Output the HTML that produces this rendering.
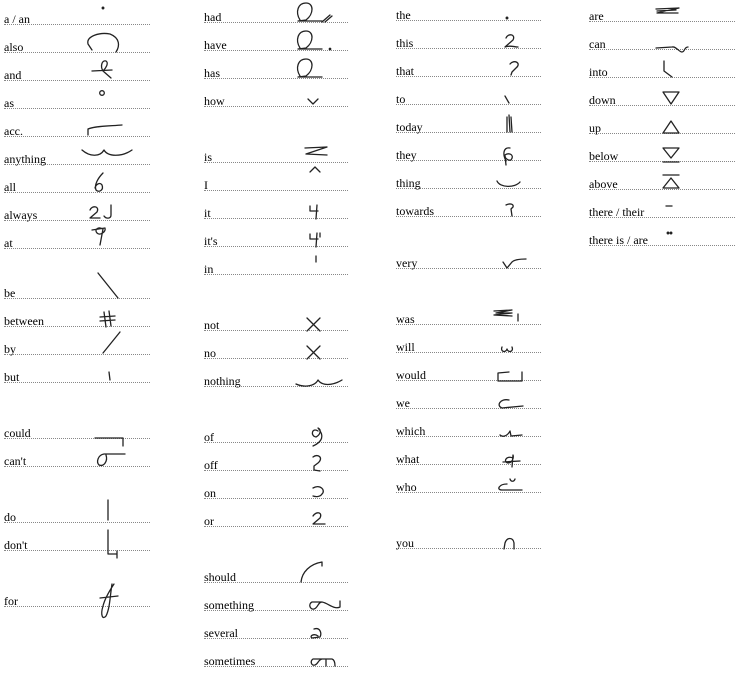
<!DOCTYPE html>
<html><head><meta charset="utf-8"><style>
body{margin:0;width:741px;height:674px;background:#fff;position:relative;overflow:hidden;font-family:"Liberation Serif",serif;font-size:12px;color:#000}
.l{position:absolute;height:14px;line-height:18px;border-bottom:1px dotted #888;white-space:nowrap;overflow:visible}
.c1{left:4px;width:146px}.c2{left:204px;width:144px}.c3{left:396px;width:145px}.c4{left:589px;width:146px}
svg{position:absolute;left:0;top:0}
</style></head><body>
<div class="l c1" style="top:10px">a / an</div>
<div class="l c1" style="top:38px">also</div>
<div class="l c1" style="top:66px">and</div>
<div class="l c1" style="top:94px">as</div>
<div class="l c1" style="top:122px">acc.</div>
<div class="l c1" style="top:150px">anything</div>
<div class="l c1" style="top:178px">all</div>
<div class="l c1" style="top:206px">always</div>
<div class="l c1" style="top:234px">at</div>
<div class="l c1" style="top:284px">be</div>
<div class="l c1" style="top:312px">between</div>
<div class="l c1" style="top:340px">by</div>
<div class="l c1" style="top:368px">but</div>
<div class="l c1" style="top:424px">could</div>
<div class="l c1" style="top:452px">can't</div>
<div class="l c1" style="top:508px">do</div>
<div class="l c1" style="top:536px">don't</div>
<div class="l c1" style="top:592px">for</div>

<div class="l c2" style="top:8px">had</div>
<div class="l c2" style="top:36px">have</div>
<div class="l c2" style="top:64px">has</div>
<div class="l c2" style="top:92px">how</div>
<div class="l c2" style="top:148px">is</div>
<div class="l c2" style="top:176px">I</div>
<div class="l c2" style="top:204px">it</div>
<div class="l c2" style="top:232px">it's</div>
<div class="l c2" style="top:260px">in</div>
<div class="l c2" style="top:316px">not</div>
<div class="l c2" style="top:344px">no</div>
<div class="l c2" style="top:372px">nothing</div>
<div class="l c2" style="top:428px">of</div>
<div class="l c2" style="top:456px">off</div>
<div class="l c2" style="top:484px">on</div>
<div class="l c2" style="top:512px">or</div>
<div class="l c2" style="top:568px">should</div>
<div class="l c2" style="top:596px">something</div>
<div class="l c2" style="top:624px">several</div>
<div class="l c2" style="top:652px">sometimes</div>

<div class="l c3" style="top:6px">the</div>
<div class="l c3" style="top:34px">this</div>
<div class="l c3" style="top:62px">that</div>
<div class="l c3" style="top:90px">to</div>
<div class="l c3" style="top:118px">today</div>
<div class="l c3" style="top:146px">they</div>
<div class="l c3" style="top:174px">thing</div>
<div class="l c3" style="top:202px">towards</div>
<div class="l c3" style="top:254px">very</div>
<div class="l c3" style="top:310px">was</div>
<div class="l c3" style="top:338px">will</div>
<div class="l c3" style="top:366px">would</div>
<div class="l c3" style="top:394px">we</div>
<div class="l c3" style="top:422px">which</div>
<div class="l c3" style="top:450px">what</div>
<div class="l c3" style="top:478px">who</div>
<div class="l c3" style="top:534px">you</div>

<div class="l c4" style="top:7px">are</div>
<div class="l c4" style="top:35px">can</div>
<div class="l c4" style="top:63px">into</div>
<div class="l c4" style="top:91px">down</div>
<div class="l c4" style="top:119px">up</div>
<div class="l c4" style="top:147px">below</div>
<div class="l c4" style="top:175px">above</div>
<div class="l c4" style="top:203px">there / their</div>
<div class="l c4" style="top:231px">there is / are</div>

<svg width="741" height="674" fill="none" stroke="#222" stroke-width="1.3" stroke-linecap="round" stroke-linejoin="round">
<circle cx="103" cy="8" r="0.8" fill="#222"/>
<path d="M92 50 L88 44 C86 36 100 32 110 34 C120 38 120 46 116 52"/>
<path d="M92 71 L112 70 M103 71 C100 66 102 60 106 61 C109 63 106 68 103 71 L111 78"/>
<circle cx="102" cy="93" r="2.3"/>
<path d="M88 135 L88 129 C95 126 110 126 122 125"/>
<path d="M82 150 C90 157 100 157 104 150 C108 157 122 157 132 150"/>
<path d="M103 173 C98 178 94 185 96 190 C99 193 104 190 102 185 C100 182 96 184 95 188"/>
<path d="M90 210 C92 205 100 206 97 212 L90 218 L100 218 M111 205 L111 215 C111 219 106 219 104 216"/>
<path d="M92 230 L105 228 C106 232 100 236 97 233 C94 230 98 226 103 229 L100 245"/>
<path d="M98 273 L118 298"/>
<path d="M104 312 L106 327 M109 311 L111 326 M100 317 L115 316 M100 321 L115 320"/>
<path d="M120 332 L103 353"/>
<path d="M109 372 L110 380"/>
<path d="M95 438 L123 438 L123 446"/>
<path d="M125 454 L104 454 C98 455 96 462 99 465 C104 467 108 461 106 455"/>
<path d="M108 500 L108 520"/>
<path d="M108 530 L108 554 L117 554 M117 551 L117 558"/>
<path d="M114 584 C110 590 105 598 103 606 C100 616 103 620 106 616 C110 608 110 596 112 584 M100 598 L118 596"/>

<path d="M300 20 C295 12 298 3 306 3 C314 3 314 14 306 20 L298 21 L322 21 M322 22 L330 15 M325 22 L332 16"/>
<path d="M300 48 C295 40 298 31 306 31 C314 31 314 42 306 48 L298 49 L322 49"/><circle cx="330" cy="49" r="0.7" fill="#222"/>
<path d="M300 76 C295 68 298 59 306 59 C314 59 314 70 306 76 L298 77 L322 77"/>
<path d="M308 99 L313 104 L318 99"/>
<path d="M305 148 L327 147 L306 154 L327 155"/>
<path d="M310 172 L315 167 L320 172"/>
<path d="M310 206 L310 211 L318 211 M317 205 L316 219"/>
<path d="M310 234 L310 239 L318 239 M317 233 L316 247 M320 233 L320 237"/>
<path d="M316 256 L316 262"/>
<path d="M307 318 L320 331 M320 318 L307 331"/>
<path d="M307 346 L320 359 M320 346 L307 359"/>
<path d="M296 384 C305 388 315 386 318 380 C322 386 332 386 342 380"/>
<path d="M318 431 C312 427 310 436 316 437 C320 435 322 430 318 428 C325 436 322 442 313 446"/>
<path d="M313 457 C318 453 324 458 318 463 L314 466 L314 470 L320 471"/>
<path d="M313 488 C320 484 326 490 322 494 C320 497 316 497 313 496"/>
<path d="M313 516 C316 511 323 512 320 518 L313 524 L325 524"/>
<path d="M301 582 C302 572 310 564 322 562 L322 566"/>
<path d="M322 602 L312 602 C308 604 310 610 314 609 C318 608 318 602 322 602 C328 603 334 610 340 607 L340 601"/>
<path d="M314 629 C320 627 322 633 320 637 L312 638 C309 636 314 633 318 636"/>
<path d="M323 659 L313 659 C310 661 311 666 315 665 C318 664 318 660 322 659 L332 659 C335 660 335 664 335 666 M326 659 L326 666"/>

<circle cx="507" cy="18" r="0.8" fill="#222"/>
<path d="M506 38 C508 33 516 34 513 40 L505 47 C510 45 514 47 518 47"/>
<path d="M510 64 C514 59 522 63 516 68 L512 72 L511 75"/>
<path d="M505 96 L509 103"/>
<path d="M507 117 L507 132 M509 115 L510 132 M511 117 L512 132"/>
<path d="M506 161 C502 153 504 147 510 148 M505 155 C509 152 515 155 511 160 C508 161 505 158 505 156 L506 165"/>
<path d="M497 181 C500 188 515 188 520 182"/>
<path d="M506 205 C510 203 514 204 513 207 L511 209 L512 216"/>
<path d="M503 262 L507 268 L512 262 C515 259 522 259 526 259"/>
<path d="M494 311 L512 310 L496 313 L512 313 L494 315 L512 316 M518 314 L518 321"/>
<path d="M502 347 C500 352 506 353 507 349 C508 353 514 352 512 347"/>
<path d="M509 372 L498 373 L498 381 L522 381 L522 372"/>
<path d="M509 400 C500 398 496 406 502 408 L523 406"/>
<path d="M500 435 C502 437 507 437 510 431 L511 436 L522 435"/>
<path d="M513 458 C506 455 503 462 508 463 C512 463 514 458 513 455 L512 467 M503 462 L520 461"/>
<path d="M507 484 C499 484 496 490 502 490 L522 490 M510 479 C511 482 514 482 515 479"/>
<path d="M504 549 L505 543 C507 537 513 537 514 543 L514 549"/>

<path d="M656 9 L679 8 L657 13 L678 13 M657 11 L676 10"/>
<path d="M656 48 L672 47 C676 46 679 52 682 52 C685 52 684 47 688 47"/>
<path d="M664 61 L664 71 L672 77"/>
<path d="M663 92 L679 92 L671 104 Z"/>
<path d="M671 121 L679 133 L663 133 Z"/>
<path d="M663 148 L679 148 L671 158 Z M663 162 L679 162"/>
<path d="M663 175 L679 175 M671 178 L679 188 L663 188 Z"/>
<path d="M666 206 L672 206"/>
<circle cx="668" cy="233" r="0.8" fill="#222"/><circle cx="671" cy="233" r="0.8" fill="#222"/>
</svg>
</body></html>
